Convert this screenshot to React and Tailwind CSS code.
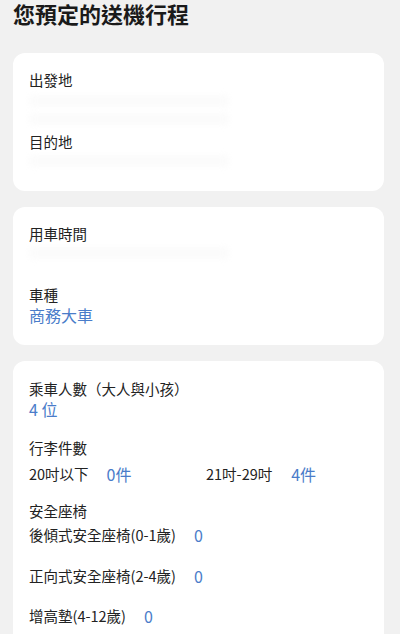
import React from "react";

const font = { fontFamily: '"Noto Sans CJK TC", "Noto Sans", sans-serif' };

const Label = ({ children, className = "" }) => (
	<div className={`text-[14.5px] leading-[22px] text-[#222] ${className}`}>{children}</div>
);

const Value = ({ children, className = "" }) => (
	<div className={`text-[16px] leading-[22px] text-[#4a7cc9] ${className}`}>{children}</div>
);

// the reference has blurred-out personal data here
const Hidden = ({ lines = 1 }) => (
	<div className="flex flex-col gap-[6px] py-[2px]">
		{Array.from({ length: lines }).map((_, i) => (
			<div key={i} className="h-[12px] w-[200px] rounded bg-[#fbfbfb] blur-[3px]" />
		))}
	</div>
);

const Card = ({ children, className = "" }) => (
	<div className={`bg-white rounded-[12px] px-4 ${className}`}>{children}</div>
);

const SeatRow = ({ label, count, className = "" }) => (
	<div className={`flex items-center gap-[18px] ${className}`}>
		<Label>{label}</Label>
		<Value>{count}</Value>
	</div>
);

export default function App() {
	return (
		<div className="min-h-[634px] bg-[#f1f1f1] pl-[13px] pr-[16px] overflow-hidden" style={font}>
			<h1 className="text-[22px] leading-[26px] font-bold text-[#1a1a1a]">您預定的送機行程</h1>

			<Card className="mt-[27px] pt-4 pb-4">
				<Label>出發地</Label>
				<div className="h-[40px] pt-[2px]">
					<Hidden lines={2} />
				</div>
				<Label>目的地</Label>
				<div className="h-[22px]">
					<Hidden />
				</div>
			</Card>

			<Card className="mt-4 pt-4 pb-[19px]">
				<Label>用車時間</Label>
				<div className="h-[39px]">
					<Hidden />
				</div>
				<Label>車種</Label>
				<Value className="-mt-[2px]">商務大車</Value>
			</Card>

			<Card className="mt-4 pt-[17px] pb-6">
				<Label>乘車人數（大人與小孩）</Label>
				<Value className="-mt-[2px]">4 位</Value>

				<Label className="mt-[17px]">行李件數</Label>
				<div className="flex items-center mt-[4px]">
					<div className="flex items-center gap-[18px] w-[177px]">
						<Label>20吋以下</Label>
						<Value>0件</Value>
					</div>
					<div className="flex items-center gap-[19px]">
						<Label>21吋-29吋</Label>
						<Value>4件</Value>
					</div>
				</div>

				<Label className="mt-[15px]">安全座椅</Label>
				<SeatRow label="後傾式安全座椅(0-1歲)" count="0" className="mt-[2px]" />
				<SeatRow label="正向式安全座椅(2-4歲)" count="0" className="mt-[19px]" />
				<SeatRow label="增高墊(4-12歲)" count="0" className="mt-[18px]" />
			</Card>
		</div>
	);
}
